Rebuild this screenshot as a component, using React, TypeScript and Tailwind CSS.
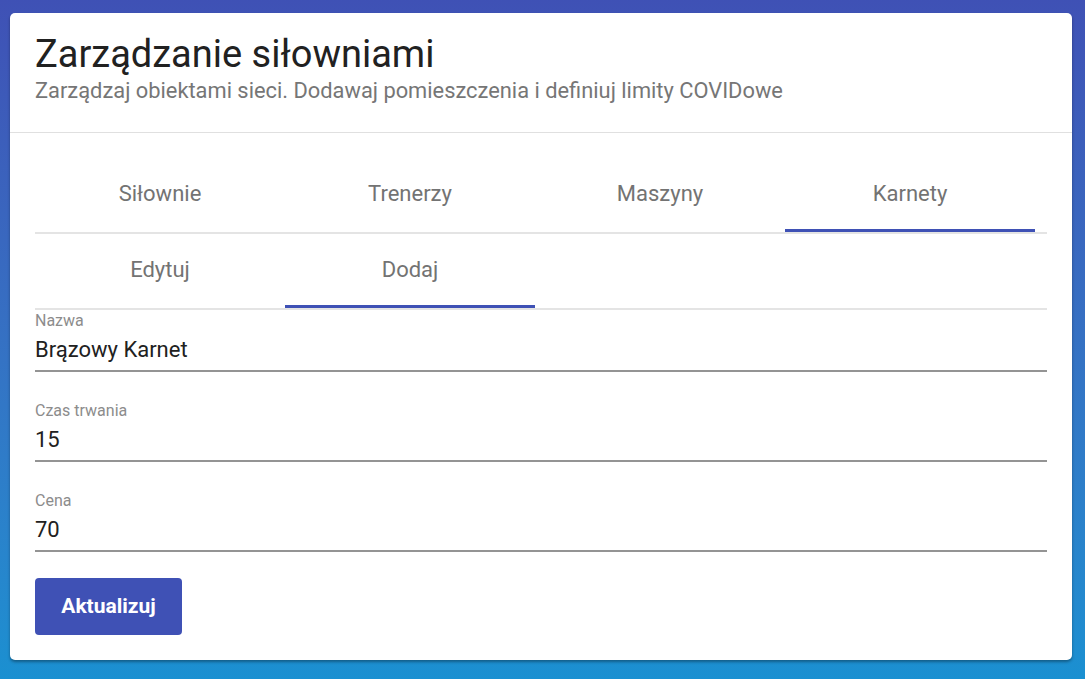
import React from "react";

const topTabs = ["Siłownie", "Trenerzy", "Maszyny", "Karnety"];
const subTabs = ["Edytuj", "Dodaj"];

function TabRow({ tabs, active }: { tabs: string[]; active: number }) {
  return (
    <div className="flex border-b-2 border-[#e4e4e4]">
      {tabs.map((t, i) => (
        <div
          key={t}
          className="relative flex h-[74px] w-[250px] items-center justify-center pb-[4px] text-[22px] font-normal text-[#737373]"
        >
          <span>{t}</span>
          {i === active && (
            <div className="absolute bottom-0 left-0 h-[3px] w-full bg-[#3f51b5]" />
          )}
        </div>
      ))}
    </div>
  );
}

function Field({ label, value }: { label: string; value: string }) {
  return (
    <div className="mb-[28px]">
      <div className="h-[24px] text-[16px] leading-[22px] text-[#8c8c8c]">{label}</div>
      <div className="h-[36px] text-[22px] leading-[32px] text-[#212121]">{value}</div>
      <div className="h-[2px] bg-[#949494]" />
    </div>
  );
}

export default function App() {
  return (
    <div
      className="min-h-[679px] bg-gradient-to-b from-[#3f51b5] to-[#1a90d1] px-[10px] pt-[13px] pb-[19px]"
      style={{ fontFamily: "Roboto, 'Noto Sans', sans-serif" }}
    >
      <div className="w-[1062px] rounded-[5px] bg-white shadow-[0_2px_3px_rgba(0,0,0,0.35)]">
        <div className="border-b border-[#e0e0e0] px-[25px] pt-[19px] pb-[28px]">
          <div className="text-[38px] leading-[44px] text-[#212121]">Zarządzanie siłowniami</div>
          <div className="mt-[2px] text-[21.85px] leading-[26px] text-[#767676]">
            Zarządzaj obiektami sieci. Dodawaj pomieszczenia i definiuj limity COVIDowe
          </div>
        </div>
        <div className="px-[25px] pt-[25px] pb-[25px]">
          <TabRow tabs={topTabs} active={3} />
          <TabRow tabs={subTabs} active={1} />
          <Field label="Nazwa" value="Brązowy Karnet" />
          <Field label="Czas trwania" value="15" />
          <div className="-mb-[2px]">
            <Field label="Cena" value="70" />
          </div>
          <button className="h-[57px] w-[147px] rounded-[4px] bg-[#3f51b5] text-[21px] font-bold text-white">
            Aktualizuj
          </button>
        </div>
      </div>
    </div>
  );
}
